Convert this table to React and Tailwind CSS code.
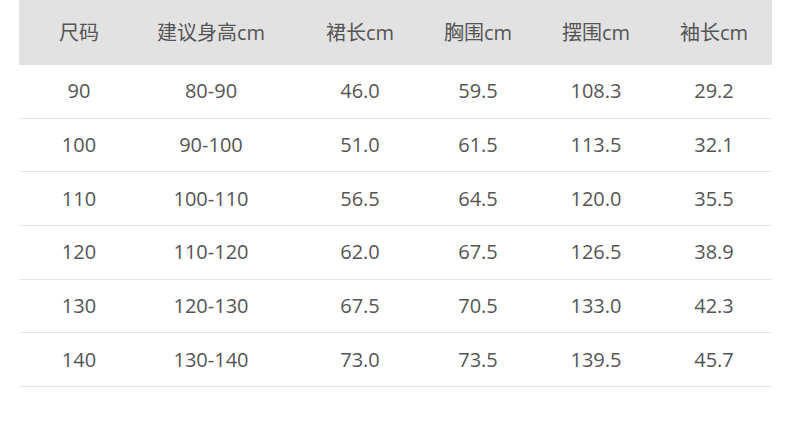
import React from 'react';

const HEADERS = ['尺码', '建议身高cm', '裙长cm', '胸围cm', '摆围cm', '袖长cm'];

const ROWS = [
  ['90', '80-90', '46.0', '59.5', '108.3', '29.2'],
  ['100', '90-100', '51.0', '61.5', '113.5', '32.1'],
  ['110', '100-110', '56.5', '64.5', '120.0', '35.5'],
  ['120', '110-120', '62.0', '67.5', '126.5', '38.9'],
  ['130', '120-130', '67.5', '70.5', '133.0', '42.3'],
  ['140', '130-140', '73.0', '73.5', '139.5', '45.7']
];

// column widths picked so each cell's centre lines up with the picture
const COL_WIDTHS = ['w-[120px]', 'w-[144px]', 'w-[154px]', 'w-[82px]', 'w-[154px]', 'w-[82px]'];

const SizeTable = () => (
  <div className="w-[753px] ml-[19px] text-[20px] text-[#555]">
    <div className="flex h-[65px] bg-[#e2e2e2] items-center">
      {HEADERS.map((h, i) => (
        <div key={h} className={`${COL_WIDTHS[i]} flex justify-center whitespace-nowrap`}>
          {h}
        </div>
      ))}
    </div>
    {ROWS.map((row) => (
      <div key={row[0]} className="flex h-[53.67px] items-center border-b border-[#e6e6e6]">
        {row.map((v, i) => (
          <div key={i} className={`${COL_WIDTHS[i]} flex justify-center whitespace-nowrap`}>
            {v}
          </div>
        ))}
      </div>
    ))}
  </div>
);

const App = () => (
  <div
    className="w-[790px] h-[431px] bg-white overflow-hidden"
    style={{ fontFamily: '"Open Sans", "Noto Sans CJK SC", sans-serif' }}
  >
    <SizeTable />
  </div>
);

export default App;
